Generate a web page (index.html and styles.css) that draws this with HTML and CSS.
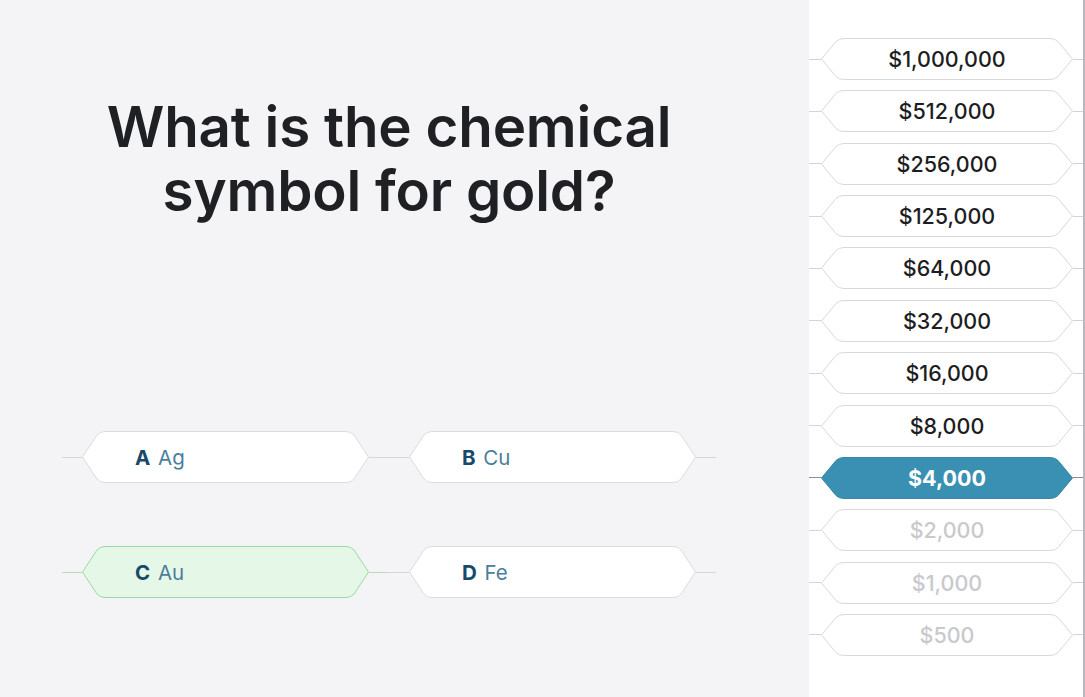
FILE: index.html
```html
<!DOCTYPE html>
<html lang="en">
<head>
<meta charset="utf-8">
<title>Quiz</title>
<link rel="stylesheet" href="styles.css">
</head>
<body>
<div class="app">
  <main class="stage">
    <h1 class="question">What is the chemical<br>symbol for gold?</h1>
    <div class="answers">
      <div class="answer">
        <span class="wire"></span>
        <div class="hex">
          <svg class="shape" viewBox="0 0 287 52" preserveAspectRatio="none"><path d="M0.5,26 L15,4 Q18,0.5 23,0.5 L264,0.5 Q269,0.5 272,4 L286.5,26 L272,48 Q269,51.5 264,51.5 L23,51.5 Q18,51.5 15,48 Z"/></svg>
          <span class="label"><b>A</b> Ag</span>
        </div>
        <span class="wire"></span>
      </div>
      <div class="answer">
        <span class="wire"></span>
        <div class="hex">
          <svg class="shape" viewBox="0 0 287 52" preserveAspectRatio="none"><path d="M0.5,26 L15,4 Q18,0.5 23,0.5 L264,0.5 Q269,0.5 272,4 L286.5,26 L272,48 Q269,51.5 264,51.5 L23,51.5 Q18,51.5 15,48 Z"/></svg>
          <span class="label"><b>B</b> Cu</span>
        </div>
        <span class="wire"></span>
      </div>
      <div class="answer correct">
        <span class="wire"></span>
        <div class="hex">
          <svg class="shape" viewBox="0 0 287 52" preserveAspectRatio="none"><path d="M0.5,26 L15,4 Q18,0.5 23,0.5 L264,0.5 Q269,0.5 272,4 L286.5,26 L272,48 Q269,51.5 264,51.5 L23,51.5 Q18,51.5 15,48 Z"/></svg>
          <span class="label"><b>C</b> Au</span>
        </div>
        <span class="wire"></span>
      </div>
      <div class="answer">
        <span class="wire"></span>
        <div class="hex">
          <svg class="shape" viewBox="0 0 287 52" preserveAspectRatio="none"><path d="M0.5,26 L15,4 Q18,0.5 23,0.5 L264,0.5 Q269,0.5 272,4 L286.5,26 L272,48 Q269,51.5 264,51.5 L23,51.5 Q18,51.5 15,48 Z"/></svg>
          <span class="label"><b>D</b> Fe</span>
        </div>
        <span class="wire"></span>
      </div>
    </div>
  </main>
  <aside class="ladder">
    <div class="step"><span class="wire"></span><div class="hex"><svg class="shape" viewBox="0 0 252 42" preserveAspectRatio="none"><path d="M0.5,21 L15,3.5 Q18,0.5 23,0.5 L229,0.5 Q234,0.5 237,3.5 L251.5,21 L237,38.5 Q234,41.5 229,41.5 L23,41.5 Q18,41.5 15,38.5 Z"/></svg><span class="amount">$1,000,000</span></div><span class="wire"></span></div>
    <div class="step"><span class="wire"></span><div class="hex"><svg class="shape" viewBox="0 0 252 42" preserveAspectRatio="none"><path d="M0.5,21 L15,3.5 Q18,0.5 23,0.5 L229,0.5 Q234,0.5 237,3.5 L251.5,21 L237,38.5 Q234,41.5 229,41.5 L23,41.5 Q18,41.5 15,38.5 Z"/></svg><span class="amount">$512,000</span></div><span class="wire"></span></div>
    <div class="step"><span class="wire"></span><div class="hex"><svg class="shape" viewBox="0 0 252 42" preserveAspectRatio="none"><path d="M0.5,21 L15,3.5 Q18,0.5 23,0.5 L229,0.5 Q234,0.5 237,3.5 L251.5,21 L237,38.5 Q234,41.5 229,41.5 L23,41.5 Q18,41.5 15,38.5 Z"/></svg><span class="amount">$256,000</span></div><span class="wire"></span></div>
    <div class="step"><span class="wire"></span><div class="hex"><svg class="shape" viewBox="0 0 252 42" preserveAspectRatio="none"><path d="M0.5,21 L15,3.5 Q18,0.5 23,0.5 L229,0.5 Q234,0.5 237,3.5 L251.5,21 L237,38.5 Q234,41.5 229,41.5 L23,41.5 Q18,41.5 15,38.5 Z"/></svg><span class="amount">$125,000</span></div><span class="wire"></span></div>
    <div class="step"><span class="wire"></span><div class="hex"><svg class="shape" viewBox="0 0 252 42" preserveAspectRatio="none"><path d="M0.5,21 L15,3.5 Q18,0.5 23,0.5 L229,0.5 Q234,0.5 237,3.5 L251.5,21 L237,38.5 Q234,41.5 229,41.5 L23,41.5 Q18,41.5 15,38.5 Z"/></svg><span class="amount">$64,000</span></div><span class="wire"></span></div>
    <div class="step"><span class="wire"></span><div class="hex"><svg class="shape" viewBox="0 0 252 42" preserveAspectRatio="none"><path d="M0.5,21 L15,3.5 Q18,0.5 23,0.5 L229,0.5 Q234,0.5 237,3.5 L251.5,21 L237,38.5 Q234,41.5 229,41.5 L23,41.5 Q18,41.5 15,38.5 Z"/></svg><span class="amount">$32,000</span></div><span class="wire"></span></div>
    <div class="step"><span class="wire"></span><div class="hex"><svg class="shape" viewBox="0 0 252 42" preserveAspectRatio="none"><path d="M0.5,21 L15,3.5 Q18,0.5 23,0.5 L229,0.5 Q234,0.5 237,3.5 L251.5,21 L237,38.5 Q234,41.5 229,41.5 L23,41.5 Q18,41.5 15,38.5 Z"/></svg><span class="amount">$16,000</span></div><span class="wire"></span></div>
    <div class="step"><span class="wire"></span><div class="hex"><svg class="shape" viewBox="0 0 252 42" preserveAspectRatio="none"><path d="M0.5,21 L15,3.5 Q18,0.5 23,0.5 L229,0.5 Q234,0.5 237,3.5 L251.5,21 L237,38.5 Q234,41.5 229,41.5 L23,41.5 Q18,41.5 15,38.5 Z"/></svg><span class="amount">$8,000</span></div><span class="wire"></span></div>
    <div class="step current"><span class="wire"></span><div class="hex"><svg class="shape" viewBox="0 0 252 42" preserveAspectRatio="none"><path d="M0.5,21 L15,3.5 Q18,0.5 23,0.5 L229,0.5 Q234,0.5 237,3.5 L251.5,21 L237,38.5 Q234,41.5 229,41.5 L23,41.5 Q18,41.5 15,38.5 Z"/></svg><span class="amount">$4,000</span></div><span class="wire"></span></div>
    <div class="step locked"><span class="wire"></span><div class="hex"><svg class="shape" viewBox="0 0 252 42" preserveAspectRatio="none"><path d="M0.5,21 L15,3.5 Q18,0.5 23,0.5 L229,0.5 Q234,0.5 237,3.5 L251.5,21 L237,38.5 Q234,41.5 229,41.5 L23,41.5 Q18,41.5 15,38.5 Z"/></svg><span class="amount">$2,000</span></div><span class="wire"></span></div>
    <div class="step locked"><span class="wire"></span><div class="hex"><svg class="shape" viewBox="0 0 252 42" preserveAspectRatio="none"><path d="M0.5,21 L15,3.5 Q18,0.5 23,0.5 L229,0.5 Q234,0.5 237,3.5 L251.5,21 L237,38.5 Q234,41.5 229,41.5 L23,41.5 Q18,41.5 15,38.5 Z"/></svg><span class="amount">$1,000</span></div><span class="wire"></span></div>
    <div class="step locked"><span class="wire"></span><div class="hex"><svg class="shape" viewBox="0 0 252 42" preserveAspectRatio="none"><path d="M0.5,21 L15,3.5 Q18,0.5 23,0.5 L229,0.5 Q234,0.5 237,3.5 L251.5,21 L237,38.5 Q234,41.5 229,41.5 L23,41.5 Q18,41.5 15,38.5 Z"/></svg><span class="amount">$500</span></div><span class="wire"></span></div>
  </aside>
</div>
</body>
</html>
```

FILE: styles.css
```css
* { box-sizing: border-box; }
html, body { margin: 0; padding: 0; }
body {
  font-family: "Inter", "Liberation Sans", sans-serif;
  background: #f4f4f6;
  width: 1085px;
  height: 697px;
  overflow: hidden;
}
.app {
  display: flex;
  height: 697px;
}
.stage {
  width: 809px;
  flex: none;
  background: #f4f4f6;
  padding: 95px 0 0 62px;
}
.question {
  width: 654px;
  margin: 0;
  text-align: center;
  font-size: 56.5px;
  line-height: 64px;
  font-weight: 600;
  color: #1f2024;
  letter-spacing: -0.2px;
}
.answers {
  width: 654px;
  margin-top: 208px;
  display: grid;
  grid-template-columns: 327px 327px;
  row-gap: 63px;
}
.answer {
  display: flex;
  align-items: center;
  height: 52px;
}
.answer .wire {
  flex: 1;
  height: 1px;
  background: #d7d7db;
}
.answer .hex {
  width: 287px;
  height: 52px;
  flex: none;
  display: grid;
}
.shape {
  grid-area: 1 / 1;
  width: 100%;
  height: 100%;
  display: block;
  overflow: visible;
}
.shape path {
  fill: #ffffff;
  stroke: #dcdcdf;
  stroke-width: 1;
  vector-effect: non-scaling-stroke;
}
.label {
  grid-area: 1 / 1;
  align-self: center;
  padding-left: 53px;
  font-size: 20.5px;
  color: #4a7e9b;
  position: relative;
}
.label b {
  color: #17496b;
  font-weight: 700;
  margin-right: 2px;
}
.answer.correct .shape path {
  fill: #e5f8e7;
  stroke: #9ad9a3;
}
.answer.correct .wire { background: #b5dfbb; }

.ladder {
  flex: 1;
  background: #ffffff;
  border-right: 2px solid #b9b9bd;
  padding-top: 38px;
  display: flex;
  flex-direction: column;
  gap: 10.36px;
}
.step {
  display: flex;
  align-items: center;
  height: 42px;
}
.step .wire {
  height: 1px;
  background: #d4d4d8;
}
.step .wire:first-child { width: 12px; }
.step .wire:last-child { width: 10px; }
.step .hex {
  width: 252px;
  height: 42px;
  flex: none;
  display: grid;
}
.step .shape path {
  stroke: #d9d9dc;
}
.amount {
  grid-area: 1 / 1;
  align-self: center;
  justify-self: center;
  font-size: 21.5px;
  font-weight: 550;
  color: #1d1e22;
  position: relative;
}
.step.current .shape path {
  fill: #3a90b3;
  stroke: #3586a8;
}
.step.current .amount {
  color: #ffffff;
  font-weight: 700;
}
.step.current .wire { background: #8a8f94; }
.step.locked .amount { color: #c9c9cd; }
```
